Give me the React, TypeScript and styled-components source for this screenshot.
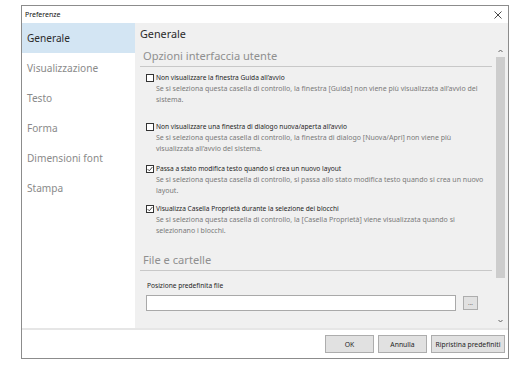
import React from 'react'
import styled, { createGlobalStyle } from 'styled-components'

const GlobalStyle = createGlobalStyle`
  html, body {
    margin: 0;
    padding: 0;
    background: #ffffff;
  }
  body {
    font-family: "Noto Sans", "Open Sans", sans-serif;
  }
`

const Page = styled.div`
  width: 531px;
  height: 365px;
  padding: 5px 0 0 21px;
  box-sizing: border-box;
`

const Dialog = styled.div`
  width: 488px;
  height: 354px;
  border: 1px solid #8c8c8c;
  box-sizing: border-box;
  display: flex;
  flex-direction: column;
  background: #ffffff;
`

const TitleBar = styled.div`
  height: 17px;
  flex: none;
  display: flex;
  align-items: center;
  justify-content: space-between;
  padding: 0 6px 0 3px;
  font-size: 7px;
  color: #111;
`

const Close = styled.svg`
  width: 8px;
  height: 8px;
`

const Main = styled.div`
  flex: 1;
  min-height: 0;
  display: flex;
`

const Sidebar = styled.ul`
  width: 113px;
  flex: none;
  margin: 0;
  padding: 0;
  list-style: none;
  background: #ffffff;
`

const NavItem = styled.li<{ active?: boolean }>`
  height: 30px;
  display: flex;
  align-items: center;
  padding-left: 5px;
  font-size: 10.1px;
  color: ${(p) => (p.active ? '#2b2b2b' : '#8a8a8a')};
  background: ${(p) => (p.active ? '#d3e5f3' : 'transparent')};
`

const Panel = styled.section`
  flex: 1;
  min-width: 0;
  display: flex;
  flex-direction: column;
  background: #f0f0f0;
`

const PanelTitle = styled.div`
  height: 21px;
  flex: none;
  display: flex;
  align-items: center;
  padding-left: 5px;
  font-size: 10.8px;
  color: #2b2b2b;
`

const PanelBody = styled.div`
  flex: 1;
  min-height: 0;
  display: flex;
`

const Scroll = styled.div`
  flex: 1;
  min-width: 0;
  overflow: hidden;
  padding: 0 1px 0 5px;
`

const SectionTitle = styled.div<{ top?: number }>`
  height: 22px;
  margin-top: ${(p) => p.top ?? 0}px;
  display: flex;
  align-items: center;
  padding-left: 3px;
  border-bottom: 1px solid #c8c8c8;
  font-size: 11.1px;
  color: #8f8f8f;
`

const OptionList = styled.div`
  padding-top: 5px;
`

const Option = styled.div<{ gap: number }>`
  padding-left: 6px;
  margin-bottom: ${(p) => p.gap}px;
`

const OptionLabel = styled.label`
  display: flex;
  align-items: center;
  height: 11px;
  font-size: 6.6px;
  color: #1e1e1e;
`

const Box = styled.span`
  width: 8px;
  height: 8px;
  margin-right: 2px;
  box-sizing: border-box;
  border: 1px solid #333;
  background: #fff;
  display: flex;
  align-items: center;
  justify-content: center;
`

const OptionText = styled.div`
  padding-left: 10px;
  font-size: 7px;
  line-height: 11px;
  color: #7a7a7a;
  padding-right: 2px;
`

const FieldLabel = styled.div`
  padding: 9px 0 0 7px;
  height: 11px;
  line-height: 11px;
  font-size: 6.6px;
  color: #1e1e1e;
`

const FieldRow = styled.div`
  display: flex;
  align-items: center;
  padding: 4px 0 0 6px;
`

const Input = styled.div`
  width: 310px;
  height: 16px;
  box-sizing: border-box;
  border: 1px solid #a9a9a9;
  background: #fff;
`

const SmallButton = styled.div`
  margin-left: 7px;
  width: 15px;
  height: 14px;
  box-sizing: border-box;
  border: 1px solid #adadad;
  background: #e1e1e1;
  font-size: 6px;
  color: #444;
  display: flex;
  align-items: center;
  justify-content: center;
`

const ScrollBar = styled.div`
  width: 14px;
  flex: none;
  display: flex;
  flex-direction: column;
  align-items: center;
  padding-right: 1px;
`

const Arrow = styled.svg`
  width: 7px;
  height: 13px;
  flex: none;
`

const Track = styled.div`
  flex: 1;
  width: 100%;
  display: flex;
  justify-content: center;
`

const Thumb = styled.div`
  width: 9px;
  height: 221px;
  background: #cdcdcd;
`

const Footer = styled.div`
  height: 28px;
  flex: none;
  border-top: 2px solid #e6e6e6;
  display: flex;
  align-items: center;
  justify-content: flex-end;
  gap: 4px;
  padding-right: 3px;
`

const Button = styled.div<{ w: number }>`
  width: ${(p) => p.w}px;
  height: 18px;
  box-sizing: border-box;
  border: 1px solid #adadad;
  background: #e1e1e1;
  font-size: 6.8px;
  color: #1e1e1e;
  display: flex;
  align-items: center;
  justify-content: center;
`

const nav = ['Generale', 'Visualizzazione', 'Testo', 'Forma', 'Dimensioni font', 'Stampa']

const options = [
  {
    label: 'Non visualizzare la finestra Guida all’avvio',
    text: 'Se si seleziona questa casella di controllo, la finestra [Guida] non viene più visualizzata all’avvio del sistema.',
    checked: false,
    gap: 16,
  },
  {
    label: 'Non visualizzare una finestra di dialogo nuova/aperta all’avvio',
    text: 'Se si seleziona questa casella di controllo, la finestra di dialogo [Nuova/Apri] non viene più visualizzata all’avvio del sistema.',
    checked: false,
    gap: 9,
  },
  {
    label: 'Passa a stato modifica testo quando si crea un nuovo layout',
    text: 'Se si seleziona questa casella di controllo, si passa allo stato modifica testo quando si crea un nuovo layout.',
    checked: true,
    gap: 7,
  },
  {
    label: 'Visualizza Casella Proprietà durante la selezione dei blocchi',
    text: 'Se si seleziona questa casella di controllo, la [Casella Proprietà] viene visualizzata quando si selezionano i blocchi.',
    checked: true,
    gap: 0,
  },
]

const Check = () => (
  <svg width="6" height="6" viewBox="0 0 6 6">
    <path d="M0.6 3.1 L2.3 4.8 L5.4 1" fill="none" stroke="#333" strokeWidth="0.9" />
  </svg>
)

const App: React.FC = () => {
  return (
    <Page>
      <GlobalStyle />
      <Dialog>
        <TitleBar>
          <span>Preferenze</span>
          <Close viewBox="0 0 8 8">
            <path d="M0.5 0.5 L7.5 7.5 M7.5 0.5 L0.5 7.5" stroke="#333" strokeWidth="0.9" />
          </Close>
        </TitleBar>
        <Main>
          <Sidebar>
            {nav.map((n, i) => (
              <NavItem key={n} active={i === 0}>
                {n}
              </NavItem>
            ))}
          </Sidebar>
          <Panel>
            <PanelTitle>Generale</PanelTitle>
            <PanelBody>
              <Scroll>
                <SectionTitle>Opzioni interfaccia utente</SectionTitle>
                <OptionList>
                  {options.map((o) => (
                    <Option key={o.label} gap={o.gap}>
                      <OptionLabel>
                        <Box>{o.checked && <Check />}</Box>
                        {o.label}
                      </OptionLabel>
                      <OptionText>{o.text}</OptionText>
                    </Option>
                  ))}
                </OptionList>
                <SectionTitle top={12}>File e cartelle</SectionTitle>
                <FieldLabel>Posizione predefinita file</FieldLabel>
                <FieldRow>
                  <Input />
                  <SmallButton>...</SmallButton>
                </FieldRow>
              </Scroll>
              <ScrollBar>
                <Arrow viewBox="0 0 7 13">
                  <path d="M1.5 8 L3.5 6 L5.5 8" fill="none" stroke="#606060" strokeWidth="1" />
                </Arrow>
                <Track>
                  <Thumb />
                </Track>
                <Arrow viewBox="0 0 7 13">
                  <path d="M1.5 5 L3.5 7 L5.5 5" fill="none" stroke="#606060" strokeWidth="1" />
                </Arrow>
              </ScrollBar>
            </PanelBody>
          </Panel>
        </Main>
        <Footer>
          <Button w={49}>OK</Button>
          <Button w={49}>Annulla</Button>
          <Button w={74}>Ripristina predefiniti</Button>
        </Footer>
      </Dialog>
    </Page>
  )
}

export default App
